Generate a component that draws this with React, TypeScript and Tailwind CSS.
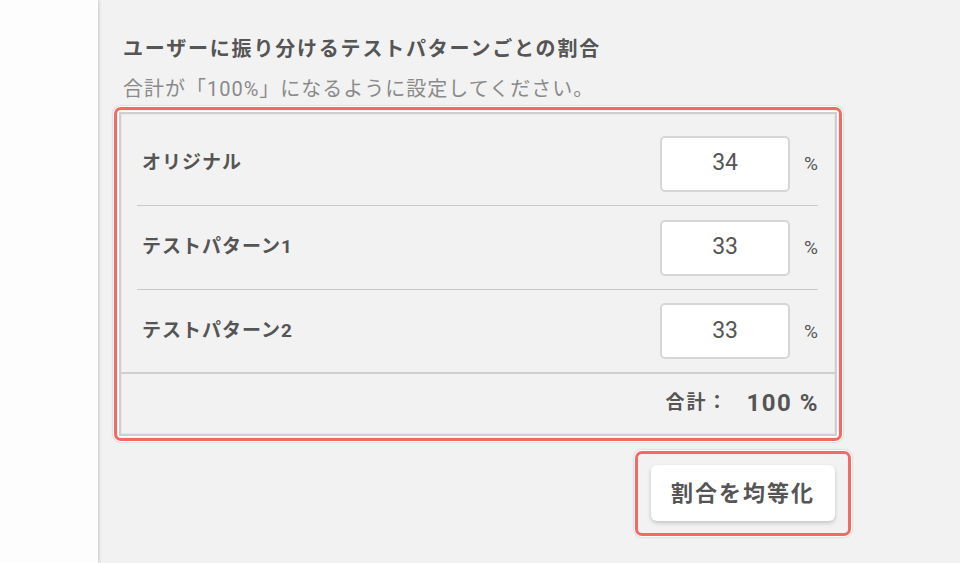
import React from 'react';

const rows = [
  { label: 'オリジナル', value: 34 },
  { label: 'テストパターン1', value: 33 },
  { label: 'テストパターン2', value: 33 },
];

export default function App() {
  return (
    <div
      className="flex h-[563px] w-[960px] overflow-hidden bg-[#f2f2f2] text-[#555]"
      style={{ fontFamily: 'Roboto, "Noto Sans CJK JP", sans-serif' }}
    >
      <div className="w-[98px] shrink-0 bg-[#fdfdfd] shadow-[1px_0_3px_rgba(0,0,0,0.18)]" />
      <div className="flex flex-col pl-[15px] pt-[35px]">
        <h2 className="pl-[10px] text-[20px] font-bold leading-[28px] tracking-[1.8px]">
          ユーザーに振り分けるテストパターンごとの割合
        </h2>
        <p className="mt-[12px] pl-[10px] text-[20px] leading-[28px] tracking-[1px] text-[#8a8a8a]">
          合計が「100%」になるように設定してください。
        </p>

        <div className="mt-[3px] w-[730px] rounded-[8px] border border-white shadow-[0_0_2px_rgba(0,0,0,0.25)]">
          <div className="rounded-[7px] border-[3px] border-[#f26a62] p-px">
            <div className="bg-white p-px">
              <div className="border-2 border-[#cfcfcf] bg-[#f2f2f2] shadow-[inset_0_0_0_1px_#e8e8e8]">
                <div className="pl-[16px] pr-[17px] pt-[8px]">
                  {rows.map((r, i) => (
                    <div
                      key={r.label}
                      className={
                        'flex items-center ' +
                        (i < rows.length - 1 ? 'h-[84px] border-b border-[#c9c9c9]' : 'h-[82px]')
                      }
                    >
                      <span className="flex-1 pl-[5px] text-[19px] font-bold tracking-[1px]">{r.label}</span>
                      <div className="flex h-[56px] w-[130px] items-center justify-center rounded-[5px] border-2 border-[#d6d6d6] bg-white text-[23px]">
                        {r.value}
                      </div>
                      <span className="ml-[14px] text-[19px] leading-none">%</span>
                    </div>
                  ))}
                </div>
                <div className="flex h-[62px] items-center justify-end border-t-2 border-[#cfcfcf] pb-[2px] pr-[16px]">
                  <span className="text-[19px] font-bold tracking-[2px]">合計：</span>
                  <span className="ml-[18px] text-[24px] font-bold tracking-[1.5px]">100 %</span>
                </div>
              </div>
            </div>
          </div>
        </div>

        <div className="-mr-[9px] mt-[8px] flex justify-end">
          <div className="rounded-[8px] border border-white shadow-[0_0_2px_rgba(0,0,0,0.25)]">
            <div className="rounded-[7px] border-[3px] border-[#f26a62] pb-[12px] pl-[13px] pr-[13px] pt-[11px]">
              <button className="h-[56px] w-[184px] rounded-[6px] bg-white text-[22px] font-bold tracking-[2px] text-[#555] shadow-[0_2px_4px_rgba(0,0,0,0.2)]">
                割合を均等化
              </button>
            </div>
          </div>
        </div>
      </div>
    </div>
  );
}
